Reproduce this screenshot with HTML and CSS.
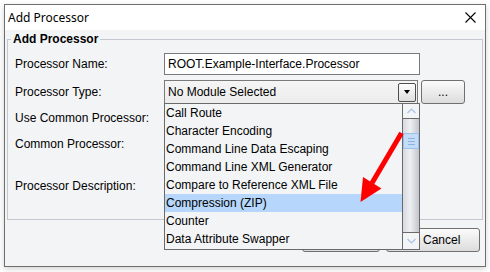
FILE: index.html
```html
<!DOCTYPE html>
<html>
<head>
<meta charset="utf-8">
<link rel="stylesheet" href="styles.css">
</head>
<body>
<div class="window">
  <div class="titlebar">
    <span class="title">Add Processor</span>
    <span class="close"><svg width="11" height="11" viewBox="0 0 11 11"><path d="M0.5 0.5 L10.5 10.5 M10.5 0.5 L0.5 10.5" stroke="#000" stroke-width="1.1" fill="none"/></svg></span>
  </div>
  <div class="content">
    <fieldset class="group">
      <legend class="legend">Add Processor</legend>
      <div class="rows">
        <div class="row r1">
          <label class="lbl">Processor Name:</label>
          <div class="textfield">ROOT.Example-Interface.Processor</div>
        </div>
        <div class="row r2">
          <label class="lbl">Processor Type:</label>
          <div class="combo">
            <span class="combo-text">No Module Selected</span>
            <span class="combo-btn"><span class="tri"></span></span>
          </div>
          <button class="btn dots">...</button>
        </div>
        <div class="row r3">
          <label class="lbl">Use Common Processor:</label>
        </div>
        <div class="row r4">
          <label class="lbl">Common Processor:</label>
        </div>
        <div class="row r5">
          <label class="lbl">Processor Description:</label>
        </div>
      </div>
    </fieldset>
    <div class="buttons">
      <button class="btn ok">OK</button>
      <button class="btn cancel">Cancel</button>
    </div>
  </div>

  <div class="popup">
    <ul class="items">
      <li>Call Route</li>
      <li>Character Encoding</li>
      <li>Command Line Data Escaping</li>
      <li>Command Line XML Generator</li>
      <li>Compare to Reference XML File</li>
      <li class="sel">Compression (ZIP)</li>
      <li>Counter</li>
      <li>Data Attribute Swapper</li>
    </ul>
    <div class="scrollbar">
      <div class="sb-btn up"><svg width="9" height="6" viewBox="0 0 9 6"><path d="M0.5 5 L4.5 1 L8.5 5" stroke="#a9c4e6" stroke-width="1.2" fill="none"/></svg></div>
      <div class="track"><div class="thumb"><span></span><span></span><span></span></div></div>
      <div class="sb-btn down"><svg width="9" height="6" viewBox="0 0 9 6"><path d="M0.5 1 L4.5 5 L8.5 1" stroke="#a9c4e6" stroke-width="1.2" fill="none"/></svg></div>
    </div>
  </div>

  <svg class="arrow" width="75" height="90" viewBox="340 125 75 90">
    <line x1="401.5" y1="133" x2="372" y2="183" stroke="#ff0000" stroke-width="5"/>
    <polygon points="360.5,202 381.5,188.5 363,177" fill="#ff0000"/>
  </svg>
</div>
</body>
</html>
```
FILE: styles.css
```css
* { box-sizing: border-box; }
html, body { margin: 0; padding: 0; background: #ffffff; }
body {
  font-family: "Liberation Sans", Arial, sans-serif;
  font-size: 12px;
  color: #000;
  width: 490px;
  height: 272px;
  overflow: hidden;
}
.window {
  position: relative;
  margin: 4px 0 0 4px;
  width: 482px;
  height: 263px;
  border: 1px solid #6f6f6f;
  background: #f3f4f6;
  box-shadow: 0 2px 6px rgba(0,0,0,0.18);
  display: flex;
  flex-direction: column;
}
.titlebar {
  height: 25px;
  background: #ffffff;
  display: flex;
  align-items: center;
  justify-content: space-between;
  padding: 0 9px 0 3px;
  flex: none;
}
.title {
  font-family: "Noto Sans", "Liberation Sans", sans-serif;
  font-size: 12px;
  line-height: 16px;
}
.close { display: flex; width: 11px; height: 11px; }
.content {
  flex: 1;
  padding: 1px 2px 0 2px;
  display: flex;
  flex-direction: column;
}
.group {
  margin: 0;
  padding: 0;
  border: 1px solid #c3c7cf;
  min-width: 0;
}
.legend {
  font-weight: bold;
  font-size: 12px;
  line-height: 16px;
  padding: 0 2px;
  margin-left: 3px;
}
.rows {
  padding: 6px 0 21px 7px;
  display: flex;
  flex-direction: column;
}
.row {
  display: flex;
  align-items: center;
  height: 24px;
}
.r1 { height: 22px; }
.r2 { margin-top: 5px; }
.r3 { margin-top: 2px; }
.r4 { margin-top: 2px; }
.r5 { margin-top: 18px; }
.lbl {
  width: 149px;
  flex: none;
  line-height: 14px;
}
.textfield {
  width: 256px;
  height: 22px;
  border: 1px solid #7a7a7a;
  background: #fff;
  padding: 0 0 0 3px;
  line-height: 20px;
}
.combo {
  width: 254px;
  height: 24px;
  border: 1px solid #7a7a7a;
  background: linear-gradient(#f5f5f5, #ececec);
  display: flex;
  align-items: center;
  justify-content: space-between;
  padding: 0 1px 0 3px;
}
.combo-btn {
  width: 18px;
  height: 19px;
  border: 1px solid #4f4f4f;
  border-radius: 2px;
  background: linear-gradient(#fdfdfd, #dedede);
  display: flex;
  align-items: center;
  justify-content: center;
}
.tri {
  width: 0;
  height: 0;
  border-left: 3.5px solid transparent;
  border-right: 3.5px solid transparent;
  border-top: 4px solid #000;
}
.btn {
  font-family: "Liberation Sans", Arial, sans-serif;
  font-size: 12px;
  color: #000;
  height: 24px;
  border: 1px solid #707070;
  border-radius: 3px;
  background: linear-gradient(#fbfbfb, #dcdcdc);
  padding: 0;
}
.dots {
  width: 44px;
  margin-left: 3px;
  line-height: 12px;
}
.buttons {
  display: flex;
  justify-content: flex-end;
  gap: 6px;
  margin-top: 8px;
  padding-right: 3px;
}
.ok { width: 78px; }
.cancel {
  width: 94px;
  text-align: left;
  padding-left: 36px;
}
.popup {
  position: absolute;
  left: 159px;
  top: 98px;
  width: 256px;
  height: 147px;
  border: 1px solid #6a6a6a;
  background: #f3f4f6;
  display: flex;
}
.items {
  list-style: none;
  margin: 0;
  padding: 0;
  flex: 1;
}
.items li {
  height: 18px;
  line-height: 18px;
  padding-left: 1px;
  white-space: nowrap;
}
.items li.sel { background: #b6d7fb; }
.scrollbar {
  width: 17px;
  flex: none;
  border-left: 1px solid #6a6a6a;
  display: flex;
  flex-direction: column;
}
.sb-btn {
  height: 15px;
  background: #f3f4f6;
  display: flex;
  align-items: center;
  justify-content: center;
  flex: none;
}
.sb-btn.up { border-bottom: 1px solid #6a6a6a; }
.sb-btn.down { border-top: 1px solid #6a6a6a; height: 17px; }
.track {
  flex: 1;
  background: linear-gradient(to right, #d6d9df, #eef0f3 45%, #c2c5cc);
  padding-top: 14px;
}
.thumb {
  height: 16px;
  background: #c3dcf8;
  border: 1px solid #9cc0ec;
  display: flex;
  flex-direction: column;
  justify-content: center;
  align-items: center;
  gap: 2px;
}
.thumb span {
  width: 7px;
  height: 1px;
  background: #8fb3e0;
}
.arrow {
  position: absolute;
  left: 335px;
  top: 120px;
}
```
